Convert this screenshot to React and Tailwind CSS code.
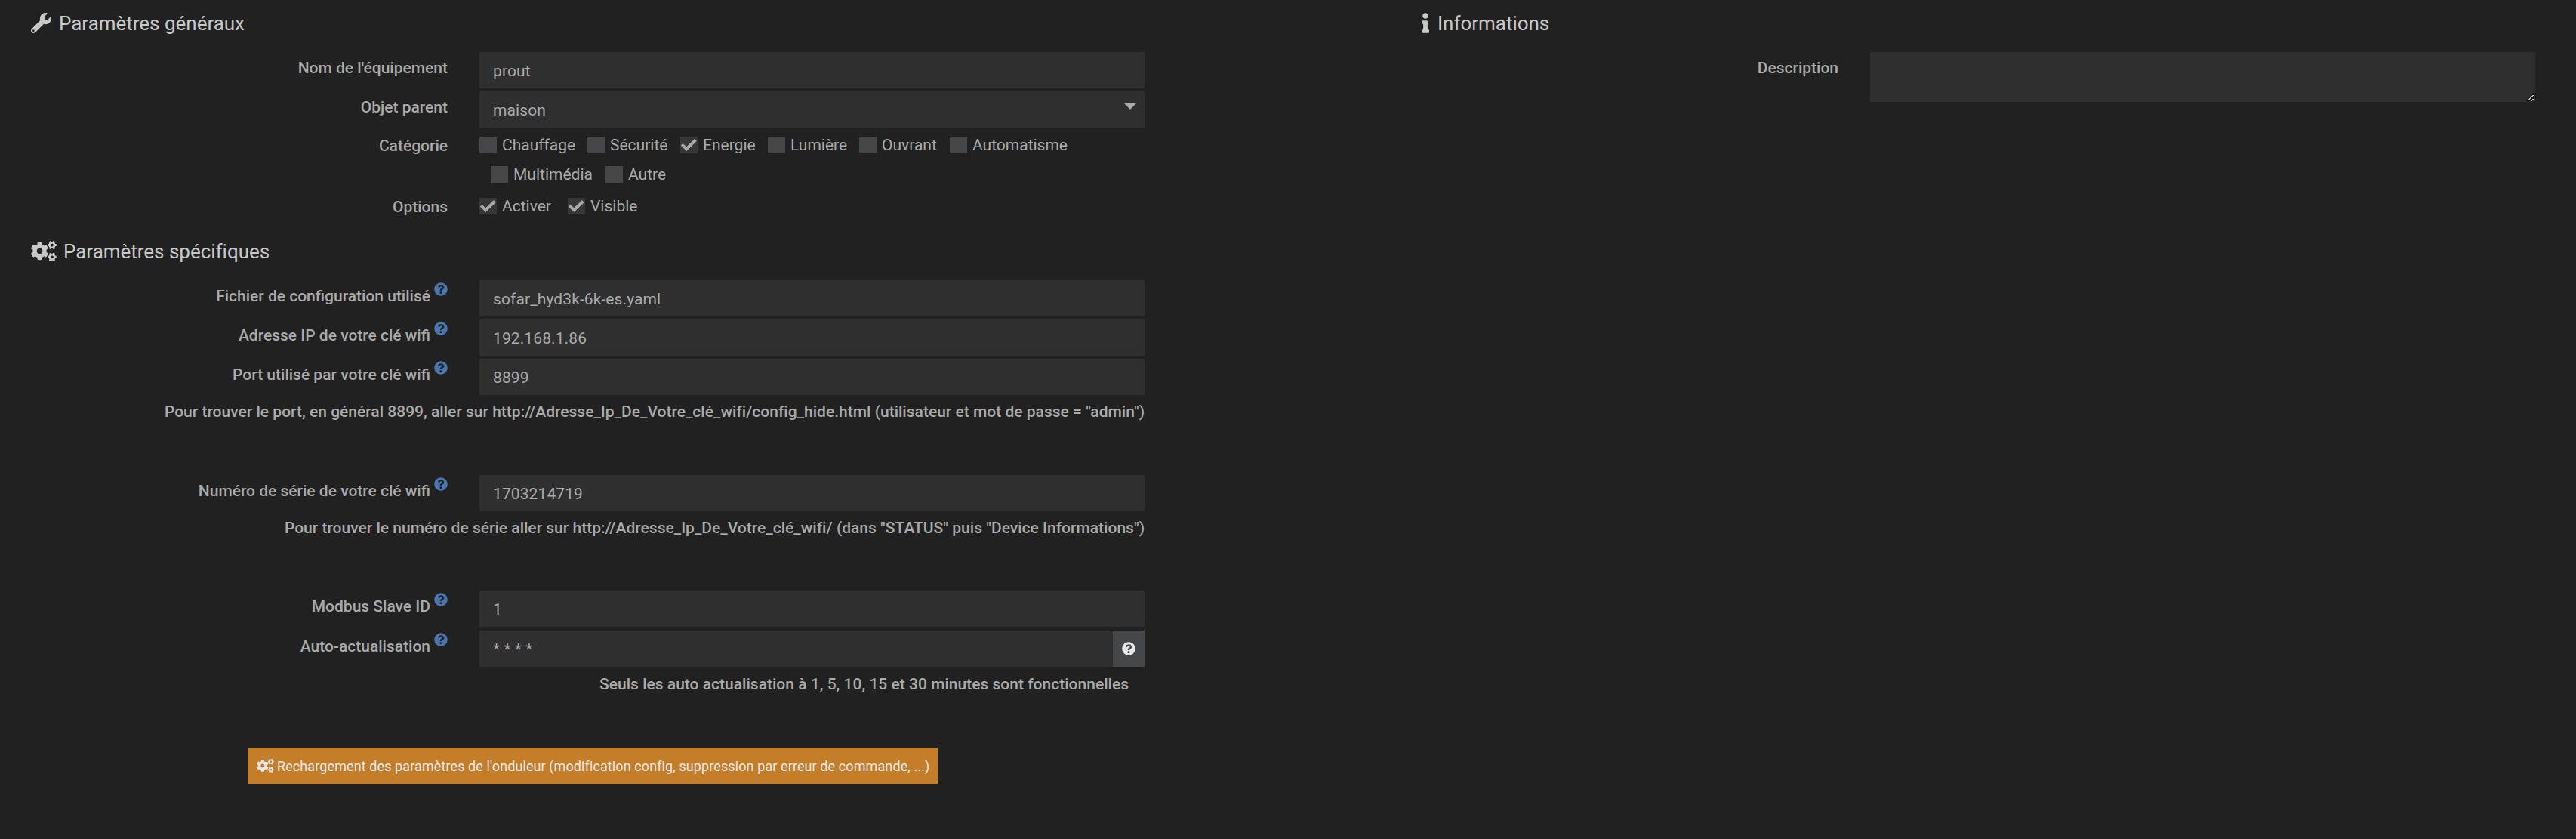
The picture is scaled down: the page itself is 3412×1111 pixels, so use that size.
import { FaWrench, FaCogs, FaInfo, FaQuestionCircle } from "react-icons/fa";

function Heading({ icon, gap, children }) {
  return (
    <h2 className="flex h-[69px] items-center pb-[8px] pl-[41px] text-[26px] text-[#c8c8c8]">
      {icon}
      <span className={"relative top-px tracking-[-0.02px] " + gap}>{children}</span>
    </h2>
  );
}

function Row({ label, help, labelPad = "pt-[6px]", className = "mb-1 h-12", children }) {
  return (
    <div className={"flex " + className}>
      <div className={"flex w-[593px] shrink-0 justify-end text-[21px] leading-[31px] font-medium " + labelPad}>
        {label}
        {help && <FaQuestionCircle className="ml-[5px] mt-[-3px] size-[18px] text-[#4b77b1]" />}
      </div>
      <div className="ml-[42px] w-[881px] shrink-0">{children}</div>
    </div>
  );
}

function Field({ value, children }) {
  return (
    <div className="flex h-12 bg-[#2f2f2f] pl-[18px] text-[21px] leading-[50px] tracking-[0.1px]">
      <span className="grow">{value}</span>
      {children}
    </div>
  );
}

function Check({ on, width, children }) {
  return (
    <label className={"flex items-center " + width}>
      <span className={"flex h-[22px] w-[23px] " + (on ? "bg-[#373737]" : "bg-[#464749]")}>
        {on && (
          <svg className="h-[22px] w-[23px]" viewBox="0 0 23 22">
            <path
              d="M1.2 11.6L3.4 9.4L8.3 13.8L19 3.6L21.3 6L8.3 18.4Z"
              fill="currentColor"
              stroke="currentColor"
              strokeLinejoin="round"
            />
          </svg>
        )}
      </span>
      <span className="ml-[7px] text-[21px] leading-[22px]">{children}</span>
    </label>
  );
}

function Note({ right = "w-[1516px]", className, children }) {
  return (
    <p className={"text-right text-[21px] leading-[30px] font-medium tracking-[0.012px] whitespace-nowrap " + right + " " + className}>
      {children}
    </p>
  );
}

export default function App() {
  return (
    <div className="flex h-[1111px] w-[3412px] overflow-hidden bg-[#212121] font-['Roboto',sans-serif] text-[#aaaaaa]">
      <div className="w-[1842px] shrink-0">
        <Heading icon={<FaWrench className="size-[27px]" />} gap="ml-[10px]">Paramètres généraux</Heading>
        <Row label="Nom de l'équipement"><Field value="prout" /></Row>
        <Row label="Objet parent">
          <Field value="maison">
            <svg className="mt-[15px] mr-[10px] h-[9px] w-[18px]" viewBox="0 0 18 9"><path d="M0 0h18L9 9z" fill="currentColor" /></svg>
          </Field>
        </Row>
        <Row label="Catégorie" labelPad="pt-[5px]" className="h-[81px]">
          <div className="flex pt-2">
            <Check width="w-[143px]">Chauffage</Check>
            <Check width="w-[123px]">Sécurité</Check>
            <Check width="w-[116px]" on>Energie</Check>
            <Check width="w-[121px]">Lumière</Check>
            <Check width="w-[120px]">Ouvrant</Check>
            <Check width="w-[160px]">Automatisme</Check>
          </div>
          <div className="flex pt-[17px] pl-[15px]">
            <Check width="w-[152px]">Multimédia</Check>
            <Check width="w-[120px]">Autre</Check>
          </div>
        </Row>
        <Row label="Options" labelPad="pt-[5px]" className="h-[48px]">
          <div className="flex pt-2">
            <Check width="w-[117px]" on>Activer</Check>
            <Check width="w-[120px]" on>Visible</Check>
          </div>
        </Row>
        <Heading icon={<FaCogs className="h-[27px] w-[34px]" />} gap="ml-[9px]">Paramètres spécifiques</Heading>
        <Row label="Fichier de configuration utilisé" help><Field value="sofar_hyd3k-6k-es.yaml" /></Row>
        <Row label="Adresse IP de votre clé wifi" help><Field value="192.168.1.86" /></Row>
        <Row label="Port utilisé par votre clé wifi" help><Field value="8899" /></Row>
        <Note className="h-[102px] pt-[3px]">Pour trouver le port, en général 8899, aller sur http://Adresse_Ip_De_Votre_clé_wifi/config_hide.html (utilisateur et mot de passe = "admin")</Note>
        <Row label="Numéro de série de votre clé wifi" help><Field value="1703214719" /></Row>
        <Note className="h-[101px] pt-[3px]">Pour trouver le numéro de série aller sur http://Adresse_Ip_De_Votre_clé_wifi/ (dans "STATUS" puis "Device Informations")</Note>
        <Row label="Modbus Slave ID" help className="h-[53px]"><Field value="1" /></Row>
        <Row label="Auto-actualisation" help>
          <Field value="* * * *">
            <span className="flex w-[42px] items-center justify-center bg-[#464749] text-[#e8e8e8]">
              <FaQuestionCircle className="size-[18px]" />
            </span>
          </Field>
        </Row>
        <Note right="w-[1495px]" className="h-[103px] pt-[4px]">Seuls les auto actualisation à 1, 5, 10, 15 et 30 minutes sont fonctionnelles</Note>
        <button className="ml-[328px] flex h-12 w-[914px] items-center bg-[#c47e29] pl-3 text-[18px] tracking-[0.1px] whitespace-nowrap text-[#e8e8e8]">
          <FaCogs className="h-[18px] w-[23px]" />
          <span className="ml-1">Rechargement des paramètres de l'onduleur (modification config, suppression par erreur de commande, ...)</span>
        </button>
      </div>
      <div className="w-[1570px] shrink-0">
        <Heading icon={<FaInfo className="h-[27px] w-[10px]" />} gap="ml-[11px]">Informations</Heading>
        <Row label="Description" className="h-[66px]">
          <div className="flex h-[66px] items-end justify-end bg-[#2f2f2f] pr-[2px] pb-px">
            <svg className="h-[10px] w-[10px]" viewBox="0 0 10 10" shapeRendering="crispEdges">
              <path d="M0 9L9 0h1v10H0z" fill="#181818" />
              <path d="M2 9.5L9.5 2M7 9.5L9.5 7" stroke="#bdbdbd" strokeWidth="1.8" />
            </svg>
          </div>
        </Row>
      </div>
    </div>
  );
}
